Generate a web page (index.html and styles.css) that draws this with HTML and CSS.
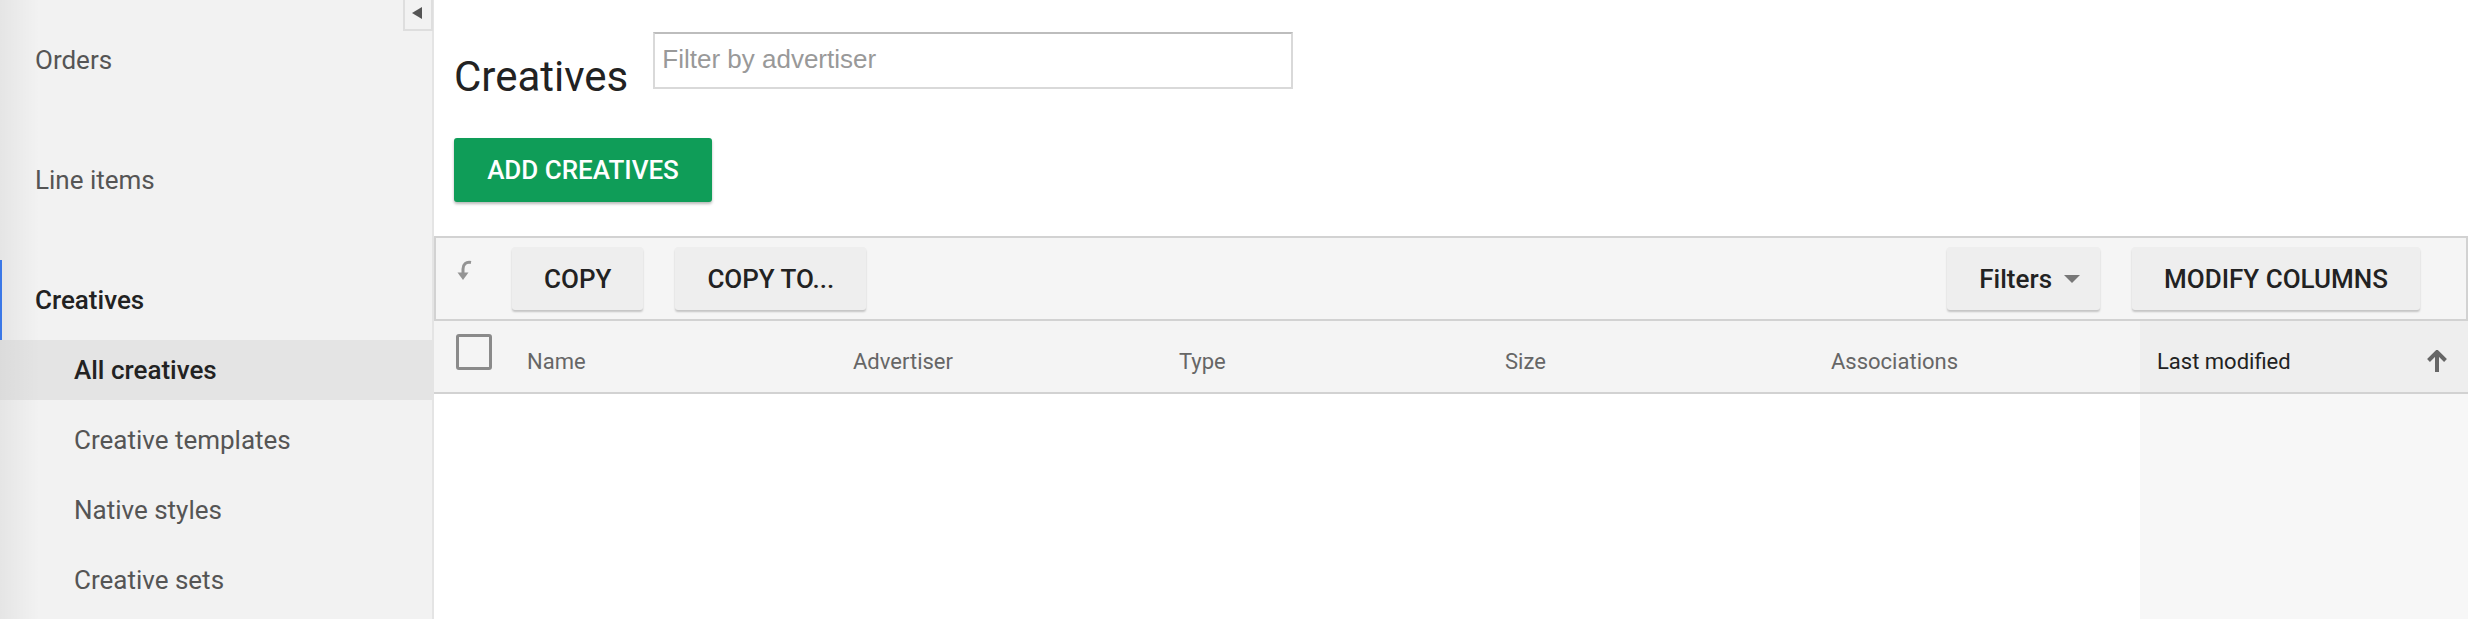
FILE: index.html
```html
<!DOCTYPE html>
<html lang="en">
<head>
<meta charset="utf-8">
<title>Creatives</title>
<link rel="stylesheet" href="styles.css">
</head>
<body>
<div class="app">
  <aside class="sidebar">
    <button class="collapse" aria-label="Collapse">
      <svg width="10" height="12" viewBox="0 0 10 12"><path d="M10 0 L0 6 L10 12 Z" fill="#555"/></svg>
    </button>
    <nav class="nav">
      <div class="nav-item">Orders</div>
      <div class="nav-item">Line items</div>
      <div class="nav-item active">Creatives</div>
      <div class="sub-list">
        <div class="sub-item selected">All creatives</div>
        <div class="sub-item">Creative templates</div>
        <div class="sub-item">Native styles</div>
        <div class="sub-item">Creative sets</div>
      </div>
    </nav>
  </aside>
  <main class="main">
    <div class="title-row">
      <h1 class="title">Creatives</h1>
      <input class="filter" type="text" placeholder="Filter by advertiser">
    </div>
    <button class="primary">ADD CREATIVES</button>
    <div class="toolbar">
      <svg class="undo" width="16" height="22" viewBox="0 0 16 22">
        <path d="M15 3.5 C10 2.5 7 5.5 7 10 V16" fill="none" stroke="#949494" stroke-width="3"/>
        <path d="M1.5 13.5 L7 21 L12.5 13.5 Z" fill="#949494"/>
      </svg>
      <button class="btn">COPY</button>
      <button class="btn">COPY TO...</button>
      <div class="toolbar-right">
        <button class="btn btn-filters">Filters<span class="caret"></span></button>
        <button class="btn">MODIFY COLUMNS</button>
      </div>
    </div>
    <div class="table">
      <div class="thead">
        <div class="th check"><span class="checkbox"></span></div>
        <div class="th">Name</div>
        <div class="th">Advertiser</div>
        <div class="th">Type</div>
        <div class="th">Size</div>
        <div class="th">Associations</div>
        <div class="th sorted">Last modified
          <svg class="sort" width="20" height="22" viewBox="0 0 20 22">
            <path d="M10 22 V4" stroke="#666" stroke-width="4" fill="none"/>
            <path d="M1.5 10.5 L10 2 L18.5 10.5" stroke="#666" stroke-width="4" fill="none"/>
          </svg>
        </div>
      </div>
      <div class="tbody">
        <div class="td"></div>
        <div class="td"></div>
        <div class="td"></div>
        <div class="td"></div>
        <div class="td"></div>
        <div class="td"></div>
        <div class="td sorted-col"></div>
      </div>
    </div>
  </main>
</div>
</body>
</html>
```

FILE: styles.css
```css
* { box-sizing: border-box; }
html, body { margin: 0; padding: 0; height: 100%; }
body {
  font-family: Roboto, "Noto Sans", Arial, sans-serif;
  background: #fff;
  color: #222;
}
.app {
  display: flex;
  height: 619px;
  overflow: hidden;
}
.sidebar {
  position: relative;
  width: 434px;
  flex: 0 0 434px;
  border-right: 2px solid #e4e4e4;
  background: linear-gradient(to right, rgba(0,0,0,0.055), rgba(0,0,0,0) 40px), #f2f2f2;
}
.collapse {
  position: absolute;
  top: 0;
  right: -1px;
  width: 30px;
  height: 31px;
  padding: 0;
  margin: 0;
  border: 2px solid #dedede;
  border-top: none;
  background: #f2f2f2;
  display: flex;
  align-items: center;
  justify-content: center;
}
.collapse svg { margin-top: -4px; margin-left: -2px; }
.nav {
  padding-top: 20px;
  display: flex;
  flex-direction: column;
}
.nav-item {
  height: 80px;
  display: flex;
  align-items: center;
  padding-left: 35px;
  font-size: 26px;
  color: #555;
  margin-bottom: 40px;
}
.nav-item.active {
  margin-bottom: 0;
  color: #222;
  font-weight: 500;
  box-shadow: inset 2px 0 0 #3b78e7;
}
.sub-list {
  display: flex;
  flex-direction: column;
  gap: 10px;
}
.sub-item {
  height: 60px;
  display: flex;
  align-items: center;
  padding-left: 74px;
  font-size: 26px;
  color: #555;
}
.sub-item.selected {
  background: linear-gradient(to right, rgba(0,0,0,0.04), rgba(0,0,0,0) 40px), #e4e4e4;
  color: #222;
  font-weight: 500;
}
.main {
  flex: 1;
  display: flex;
  flex-direction: column;
  padding: 32px 8px 0 0;
  min-width: 0;
}
.title-row {
  display: flex;
  align-items: flex-start;
  padding-left: 20px;
}
.title {
  margin: 21px 0 0 0;
  font-size: 42px;
  line-height: 48px;
  font-weight: 400;
  color: #222;
}
.filter {
  margin-left: 25px;
  width: 640px;
  height: 57px;
  border: 2px solid #d9d9d9;
  border-top-color: #bdbdbd;
  padding: 0 0 2px 7px;
  font-family: "Liberation Sans", Arial, sans-serif;
  font-size: 26px;
  color: #333;
  outline: none;
  background: #fff;
}
.filter::placeholder { color: #999; }
.primary {
  align-self: flex-start;
  margin: 37px 0 0 20px;
  width: 258px;
  height: 64px;
  border: none;
  border-radius: 3px;
  background: #0f9d58;
  color: #fff;
  font-family: Roboto, Arial, sans-serif;
  font-size: 26px;
  font-weight: 500;
  box-shadow: 0 2px 3px rgba(0,0,0,0.28);
  padding: 0;
}
.toolbar {
  margin-top: 34px;
  height: 85px;
  border: 2px solid #d2d2d2;
  background: #f5f5f5;
  display: flex;
  align-items: flex-start;
  padding-top: 9px;
}
.undo {
  margin: 12px 40px 0 20px;
  flex: 0 0 16px;
}
.btn {
  height: 63px;
  padding: 0 32px;
  border: none;
  border-radius: 3px;
  background: #eeeeee;
  box-shadow: 0 2px 2px rgba(0,0,0,0.2);
  font-family: Roboto, Arial, sans-serif;
  font-size: 26px;
  font-weight: 500;
  color: #222;
  display: inline-flex;
  align-items: center;
  margin-right: 32px;
  white-space: nowrap;
}
.btn-filters { padding-right: 20px; }
.toolbar-right {
  margin-left: auto;
  display: flex;
  padding-right: 14px;
}
.caret {
  display: inline-block;
  width: 0;
  height: 0;
  margin-left: 12px;
  border-left: 8px solid transparent;
  border-right: 8px solid transparent;
  border-top: 8px solid #777;
}
.table {
  flex: 1;
  display: flex;
  flex-direction: column;
}
.thead, .tbody {
  display: grid;
  grid-template-columns: 76px repeat(5, 326px) 1fr;
}
.thead {
  height: 73px;
  background: #f4f4f4;
  border-bottom: 2px solid #d2d2d2;
}
.th {
  padding: 28px 0 0 17px;
  font-size: 22px;
  line-height: 26px;
  color: #666;
  white-space: nowrap;
}
.th.check { padding: 13px 0 0 22px; }
.checkbox {
  display: block;
  width: 36px;
  height: 36px;
  border: 3px solid #8a8a8a;
  border-radius: 3px;
}
.th.sorted {
  background: #eeeeee;
  color: #222;
  font-weight: 400;
  display: flex;
  align-items: flex-start;
  padding-right: 21px;
}
.sort { margin-left: auto; margin-top: 1px; }
.tbody { flex: 1; }
.td.sorted-col { background: #f7f7f7; }
```
